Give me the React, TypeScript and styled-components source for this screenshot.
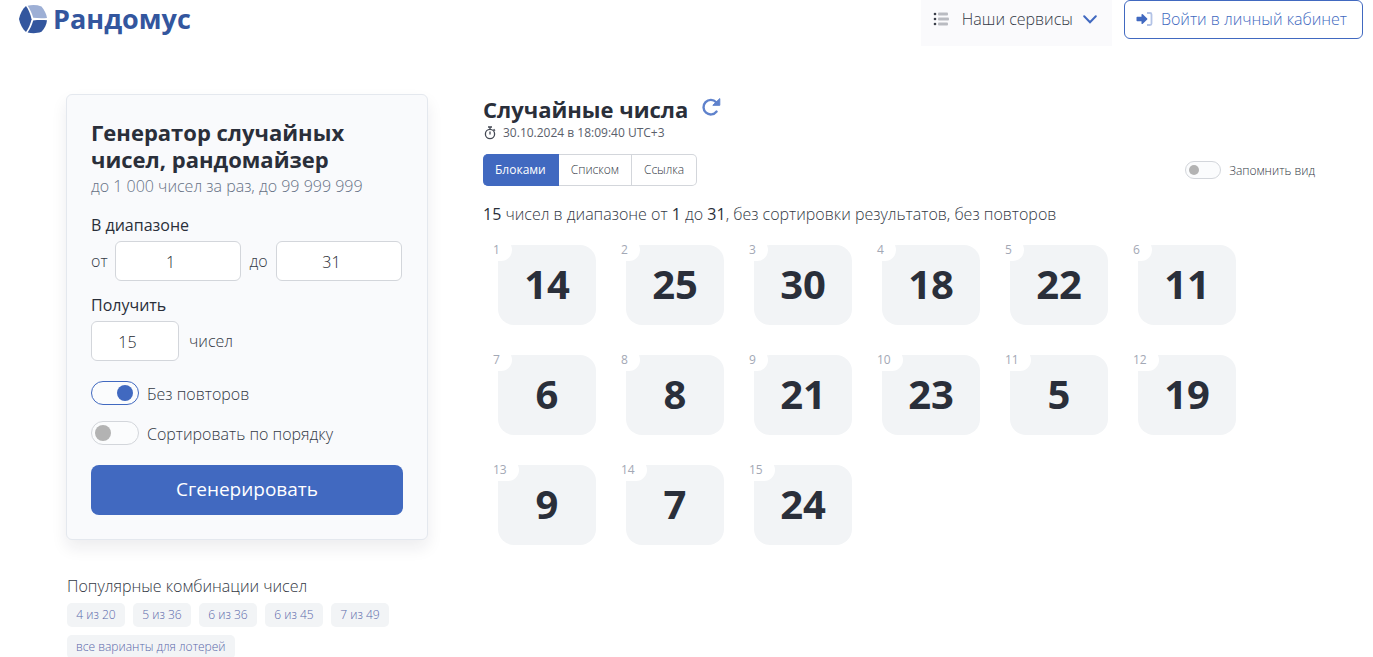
import React, { useState } from "react";
import styled, { createGlobalStyle } from "styled-components";

const blue = "#4169c0";
const ink = "#2a2f3a";
const text = "#333945";
const tile = "#f2f4f6";

const GlobalStyle = createGlobalStyle`
  * { box-sizing: border-box; }
  body {
    margin: 0;
    background: #fff;
    color: ${text};
    font: 300 16px/24px "Open Sans", "Noto Sans", sans-serif;
  }
  button, input { font: inherit; color: inherit; margin: 0; }
  h1, h2, p { margin: 0; }
`;

const Header = styled.header`
  display: flex;
  align-items: flex-start;
  padding: 0 10px 0 18px;
  height: 46px;
`;

const Logo = styled.a`
  display: flex;
  align-items: center;
  gap: 5px;
  margin-right: auto;
  height: 38px;
  color: #33569e;
  font-size: 27px;
  font-weight: 700;
  text-decoration: none;
`;

const ServicesButton = styled.button`
  display: flex;
  align-items: center;
  height: 46px;
  margin-right: 12px;
  padding: 0 15px 8px 12px;
  border: 0;
  background: #fafafc;
  cursor: pointer;

  span { margin: 0 10px 0 12px; }
`;

const LoginLink = styled.a`
  display: flex;
  align-items: center;
  gap: 8px;
  height: 39px;
  padding: 0 15px 2px 11px;
  border: 1px solid ${blue};
  border-radius: 6px;
  color: ${blue};
  text-decoration: none;
`;

const Main = styled.main`
  display: grid;
  grid-template-columns: 362px minmax(0, 1fr);
  gap: 55px;
  padding: 48px 58px 0 66px;
`;

const Card = styled.form`
  padding: 24px;
  border: 1px solid #e4e8ee;
  border-radius: 6px;
  background: #f9fafc;
  box-shadow: 0 8px 16px rgba(20, 30, 50, 0.08);
`;

const Title = styled.h1`
  color: ${ink};
  font-size: 22px;
  line-height: 27px;
  font-weight: 700;
`;

const Hint = styled.p`
  margin-bottom: 14px;
  line-height: 26px;
  color: #667185;
`;

const Legend = styled.div`
  margin-bottom: 4px;
  color: ${ink};
  font-weight: 400;
`;

const RangeRow = styled.div`
  display: grid;
  grid-template-columns: 24px 1fr 35px 1fr;
  align-items: center;
  margin: 0 1px 12px 0;

  label + input + label { text-align: center; }
`;

const CountRow = styled.div`
  display: flex;
  align-items: center;
  gap: 10px;
  margin-bottom: 20px;
`;

const NumberInput = styled.input`
  width: 100%;
  height: 40px;
  padding: 2px 0 0;
  border: 1px solid #d3d6db;
  border-radius: 6px;
  background: #fff;
  color: #24272e;
  text-align: center;
`;

const CountInput = styled(NumberInput)`
  width: 88px;
`;

const SwitchRow = styled.label<{ $small?: boolean }>`
  display: flex;
  align-items: center;
  gap: 8px;
  height: 24px;
  margin-bottom: ${(p) => (p.$small ? "0" : "16px")};
  font-size: ${(p) => (p.$small ? "12px" : "16px")};

  span { padding-top: 2px; }
`;

const Switch = styled.input<{ $small?: boolean }>`
  appearance: none;
  display: flex;
  align-items: center;
  flex: none;
  width: ${(p) => (p.$small ? "36px" : "48px")};
  height: ${(p) => (p.$small ? "18px" : "24px")};
  padding: 0 ${(p) => (p.$small ? "3px 0 3px" : "5px 0 3px")};
  border: 1px solid #d3d6db;
  border-radius: 12px;
  background: #fbfcfd;

  &::before {
    content: "";
    width: ${(p) => (p.$small ? "10px" : "16px")};
    height: ${(p) => (p.$small ? "10px" : "16px")};
    border-radius: 50%;
    background: #b3b3b3;
  }
  &:checked { border-color: ${blue}; justify-content: flex-end; }
  &:checked::before { background: ${blue}; }
`;

const Submit = styled.button`
  width: 100%;
  height: 50px;
  margin-top: 4px;
  padding-bottom: 3px;
  border: 0;
  border-radius: 8px;
  background: ${blue};
  color: #fff;
  font-size: 19px;
  font-weight: 500;
  cursor: pointer;
`;

const Popular = styled.section`
  margin-top: 34px;
  padding-left: 1px;
`;

const Tags = styled.nav`
  display: flex;
  flex-wrap: wrap;
  gap: 8px;
  margin-top: 5px;
`;

const Tag = styled.a`
  min-width: 58px;
  padding: 0 9px;
  border-radius: 5px;
  background: ${tile};
  color: #5a68aa;
  font-size: 12px;
  text-align: center;
  text-decoration: none;
`;

const Heading = styled.div`
  display: flex;
  align-items: center;
  gap: 13px;

  h2 {
    color: ${ink};
    font-size: 22px;
    line-height: 30px;
    font-weight: 700;
  }
`;

const IconButton = styled.button`
  display: flex;
  padding: 0 0 4px;
  border: 0;
  background: none;
  color: #5f82cc;
  cursor: pointer;
`;

const Stamp = styled.p`
  display: flex;
  align-items: center;
  gap: 7px;
  padding-left: 1px;
  font-size: 12px;
  font-weight: 400;
  line-height: 18px;
  color: #5a606b;
`;

const Toolbar = styled.div`
  display: flex;
  align-items: center;
  justify-content: space-between;
  margin: 12px 0 16px;
`;

const Tabs = styled.div`
  display: flex;
  height: 32px;
`;

const Tab = styled.button<{ $active: boolean }>`
  padding: 0 12px;
  border: 1px solid ${(p) => (p.$active ? blue : "#d3d6db")};
  border-left-width: 0;
  background: ${(p) => (p.$active ? blue : "#fff")};
  color: ${(p) => (p.$active ? "#fff" : text)};
  font-size: 12px;
  font-weight: ${(p) => (p.$active ? 400 : 300)};
  cursor: pointer;

  &:first-child { border-radius: 5px 0 0 5px; }
  &:last-child { border-radius: 0 5px 5px 0; }
`;

const Summary = styled.p`
  b { color: ${ink}; font-weight: 400; }
`;

const Tiles = styled.div`
  display: flex;
  flex-wrap: wrap;
  gap: 30px;
  max-width: 820px;
  padding: 19px 0 0 15px;
`;

const Tile = styled.div`
  position: relative;
  display: flex;
  align-items: center;
  justify-content: center;
  width: 98px;
  height: 80px;
  padding-bottom: 2px;
  border-radius: 16px;
  background: ${tile};
  color: ${ink};
  font-size: 40px;
  font-weight: 700;
`;

const Order = styled.span`
  position: absolute;
  top: -6px;
  left: -17px;
  padding: 0 12px;
  border-radius: 11px;
  background: #fff;
  color: #a3a8b5;
  font-size: 12px;
  line-height: 22px;
  font-weight: 400;
`;

const LogoMark = () => (
  <svg width="30" height="30" viewBox="0 0 30 30" aria-hidden="true">
    <path d="M8 2 C10.500 5.500 12.500 10 13.600 15.200 C12.500 20 10.500 24.500 8 28 C4.500 25 2 20 1 15 C2 10 4.500 5 8 2Z" fill="#33569e" />
    <path d="M9.600 1.800 C14 0.600 19 0.800 23.500 2.400 C26.500 6 28.500 10 29 14 C24 14.400 19.500 14.200 15.200 13.800 C14 9.500 12 5.500 9.600 1.800Z" fill="#9dafd5" />
    <path d="M15.200 16.400 C19.500 15.900 24.500 15.800 29 16.200 C28.600 20.500 26.500 24.500 23.500 27.800 C18.500 29.600 14 29.600 9.600 28.400 C12 25 14 21 15.200 16.400Z" fill="#33569e" />
  </svg>
);

const ListIcon = () => (
  <svg width="17" height="14" viewBox="0 0 17 14" aria-hidden="true">
    <g fill="#3c404a">
      <circle cx="2" cy="2" r="1.300" />
      <circle cx="2" cy="7" r="1.300" />
      <circle cx="2" cy="12" r="1.300" />
    </g>
    <g fill="#b9bbc1">
      <rect x="5" y="0.500" width="10" height="3" rx="1" />
      <rect x="5" y="5.500" width="11" height="3" rx="1" />
      <rect x="5" y="10.500" width="10" height="3" rx="1" />
    </g>
  </svg>
);

const ChevronIcon = () => (
  <svg width="14" height="9" viewBox="0 0 14 9" aria-hidden="true">
    <path d="M1.200 1.300 L7 7.300 L12.800 1.300" fill="none" stroke={blue} strokeWidth="2" strokeLinecap="round" />
  </svg>
);

const LoginIcon = () => (
  <svg width="17" height="14" viewBox="0 0 17 14" aria-hidden="true">
    <path d="M11 1 H14 Q15.500 1 15.500 2.500 V11.500 Q15.500 13 14 13 H11" fill="none" stroke="#b3c3e6" strokeWidth="1.800" />
    <path d="M0.500 5.500 Q0.500 4.800 1.200 4.800 H5.500 V2.500 Q5.800 1.600 6.800 2.200 L11.200 6.500 Q11.600 7 11.200 7.500 L6.800 11.800 Q5.800 12.400 5.500 11.500 V9.200 H1.200 Q0.500 9.200 0.500 8.500Z" fill={blue} />
  </svg>
);

const RefreshIcon = () => (
  <svg width="20" height="20" viewBox="0 0 20 20" aria-hidden="true">
    <path d="M15.200 5.200 A7.300 7.300 0 1 0 15.600 14.600" fill="none" stroke="currentColor" strokeWidth="2.400" strokeLinecap="round" />
    <path d="M18.800 1.600 V8.300 H11.800Z" fill="currentColor" stroke="currentColor" strokeLinejoin="round" />
  </svg>
);

const StopwatchIcon = () => (
  <svg width="12" height="14" viewBox="0 0 12 14" aria-hidden="true" fill="none" stroke="#444954" strokeWidth="1.300">
    <circle cx="6" cy="8" r="4.600" />
    <path d="M4 1 H8 M6 1 V3.400 M6 5.500 V8.400 M9.600 3.200 L11 4.600" />
  </svg>
);

const numbers = [14, 25, 30, 18, 22, 11, 6, 8, 21, 23, 5, 19, 9, 7, 24];
const views = ["Блоками", "Списком", "Ссылка"];
const combos = ["4 из 20", "5 из 36", "6 из 36", "6 из 45", "7 из 49", "все варианты для лотерей"];

export default function App() {
  const [view, setView] = useState(views[0]);

  return (
    <>
      <GlobalStyle />
      <Header>
        <Logo href="#">
          <LogoMark />
          Рандомус
        </Logo>
        <ServicesButton type="button">
          <ListIcon />
          <span>Наши сервисы</span>
          <ChevronIcon />
        </ServicesButton>
        <LoginLink href="#login">
          <LoginIcon />
          Войти в личный кабинет
        </LoginLink>
      </Header>
      <Main>
        <div>
          <Card onSubmit={(e) => e.preventDefault()}>
            <Title>Генератор случайных чисел, рандомайзер</Title>
            <Hint>до 1&nbsp;000 чисел за раз, до 99&nbsp;999&nbsp;999</Hint>
            <Legend>В диапазоне</Legend>
            <RangeRow>
              <label htmlFor="from">от</label>
              <NumberInput id="from" type="number" defaultValue={1} />
              <label htmlFor="to">до</label>
              <NumberInput id="to" type="number" defaultValue={31} />
            </RangeRow>
            <Legend>Получить</Legend>
            <CountRow>
              <CountInput id="count" type="number" defaultValue={15} />
              <label htmlFor="count">чисел</label>
            </CountRow>
            <SwitchRow>
              <Switch type="checkbox" defaultChecked />
              <span>Без повторов</span>
            </SwitchRow>
            <SwitchRow>
              <Switch type="checkbox" />
              <span>Сортировать по порядку</span>
            </SwitchRow>
            <Submit type="submit">Сгенерировать</Submit>
          </Card>
          <Popular>
            <p>Популярные комбинации чисел</p>
            <Tags>
              {combos.map((c) => (
                <Tag href="#" key={c}>{c}</Tag>
              ))}
            </Tags>
          </Popular>
        </div>
        <section>
          <Heading>
            <h2>Случайные числа</h2>
            <IconButton type="button" aria-label="Обновить">
              <RefreshIcon />
            </IconButton>
          </Heading>
          <Stamp>
            <StopwatchIcon />
            30.10.2024 в 18:09:40 UTC+3
          </Stamp>
          <Toolbar>
            <Tabs>
              {views.map((v) => (
                <Tab key={v} type="button" $active={v === view} onClick={() => setView(v)}>
                  {v}
                </Tab>
              ))}
            </Tabs>
            <SwitchRow $small>
              <Switch $small type="checkbox" />
              <span>Запомнить вид</span>
            </SwitchRow>
          </Toolbar>
          <Summary>
            <b>15</b> чисел в диапазоне от <b>1</b> до <b>31</b>, без сортировки результатов, без повторов
          </Summary>
          <Tiles>
            {numbers.map((n, i) => (
              <Tile key={n}>
                <Order>{i + 1}</Order>
                {n}
              </Tile>
            ))}
          </Tiles>
        </section>
      </Main>
    </>
  );
}
